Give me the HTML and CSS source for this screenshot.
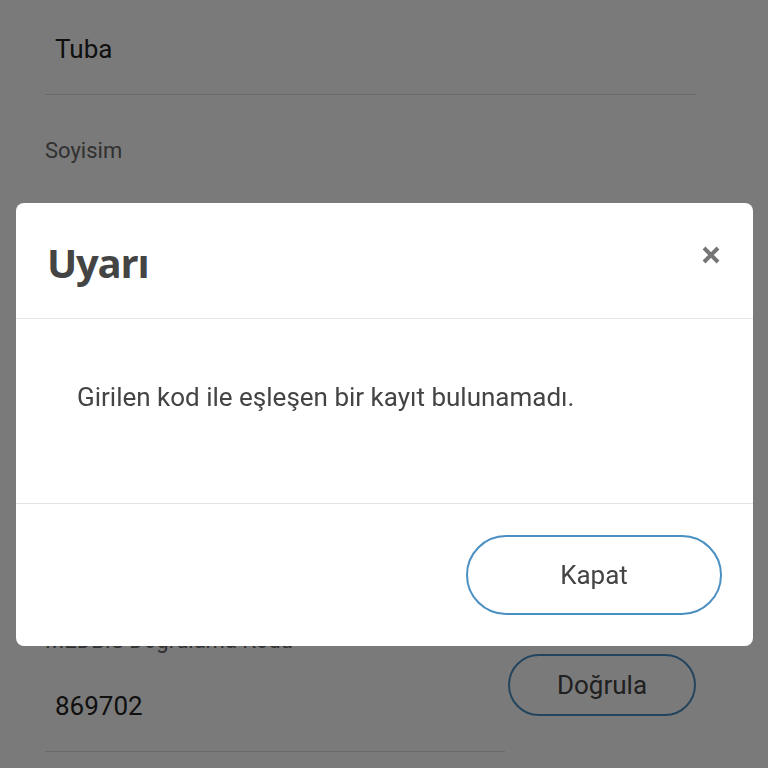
FILE: index.html
```html
<!DOCTYPE html>
<html lang="tr">
<head>
    <meta charset="UTF-8">
    <meta name="viewport" content="width=device-width, initial-scale=1.0">
    <title>Doğrulama</title>
    <link rel="stylesheet" href="styles.css">
</head>
<body>
    <div class="page">
        <div class="field">
            <div class="field-value">Tuba</div>
        </div>

        <div class="field">
            <label class="field-label">Soyisim</label>
            <div class="field-value">Yıldız</div>
        </div>

        <div class="field field-code">
            <label class="field-label">MEDBIS Doğrulama Kodu</label>
            <div class="code-row">
                <div class="field-value code-value">869702</div>
                <button class="btn-outline btn-verify">Doğrula</button>
            </div>
        </div>
    </div>

    <div class="overlay"></div>

    <div class="modal">
        <div class="modal-header">
            <h2 class="modal-title">Uyarı</h2>
            <button class="modal-close" aria-label="Kapat">
                <svg width="20" height="20" viewBox="0 0 20 20">
                    <path d="M3 3 L17 17 M17 3 L3 17" stroke="#757575" stroke-width="4" stroke-linecap="butt"/>
                </svg>
            </button>
        </div>
        <div class="modal-body">
            Girilen kod ile eşleşen bir kayıt bulunamadı.
        </div>
        <div class="modal-footer">
            <button class="btn-outline btn-close">Kapat</button>
        </div>
    </div>
</body>
</html>
```

FILE: styles.css
```css
body {
    font-family: Roboto, 'Liberation Sans', sans-serif;
    margin: 0;
    background-color: #fff;
    color: #222;
    overflow: hidden;
    height: 768px;
}

.page {
    padding: 34px 72px 0 45px;
}

.field-label {
    display: block;
    font-size: 22px;
    line-height: 26px;
    color: #666;
    margin-top: 43px;
}

.field-value {
    font-size: 26px;
    line-height: 30px;
    color: #222;
    padding: 0 10px 30px;
    border-bottom: 1px solid #ddd;
}

.field-label + .field-value {
    margin-top: 35px;
}

.field-code {
    margin-top: 368px;
}

.field-code .field-label {
    margin-top: 0;
}

.code-row {
    display: flex;
    align-items: flex-start;
}

.code-row .code-value {
    width: 440px;
    margin-top: 37px;
}

.btn-outline {
    font-family: Roboto, 'Liberation Sans', sans-serif;
    background: #fff;
    border: 2px solid #4a8fc2;
    border-radius: 40px;
    color: #444;
    font-size: 26px;
    cursor: pointer;
}

.btn-verify {
    margin-left: 3px;
    width: 188px;
    height: 62px;
}

.overlay {
    position: fixed;
    inset: 0;
    background: rgba(0, 0, 0, 0.52);
}

.modal {
    position: fixed;
    left: 16px;
    top: 203px;
    width: 737px;
    height: 443px;
    background: #fff;
    border-radius: 8px;
    display: flex;
    flex-direction: column;
}

.modal-header {
    height: 115px;
    display: flex;
    align-items: center;
    justify-content: space-between;
    padding: 0 31px;
    border-bottom: 1px solid #e3e3e3;
}

.modal-title {
    margin: 4px 0 0;
    font-family: 'Open Sans', Roboto, sans-serif;
    font-size: 40px;
    font-weight: bold;
    color: #444;
    letter-spacing: -1.2px;
}

.modal-close {
    background: none;
    border: none;
    padding: 0;
    width: 20px;
    height: 20px;
    margin-top: -12px;
    margin-right: 1px;
}

.modal-body {
    height: 185px;
    box-sizing: border-box;
    padding: 63px 61px 0;
    font-size: 26px;
    line-height: 30px;
    color: #444;
    border-bottom: 1px solid #e3e3e3;
}

.modal-footer {
    flex: 1;
    display: flex;
    justify-content: flex-end;
    align-items: center;
    padding: 0 31px;
}

.btn-close {
    width: 256px;
    height: 80px;
}
```
